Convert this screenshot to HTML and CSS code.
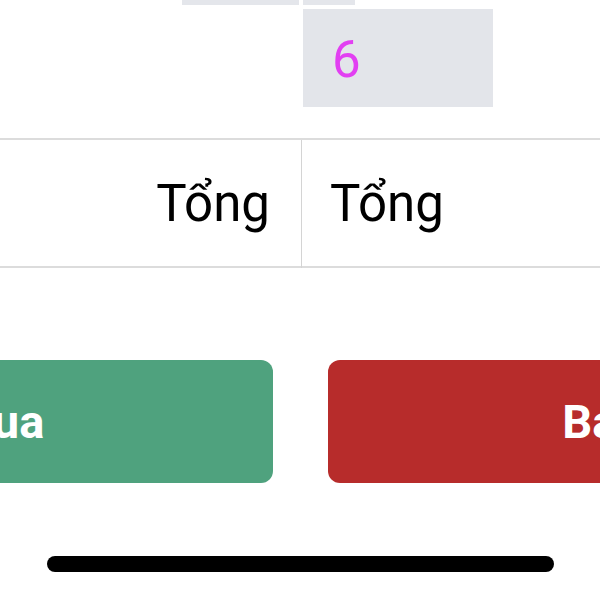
FILE: index.html
```html
<!DOCTYPE html>
<html lang="vi">
<head>
  <meta charset="UTF-8" />
  <meta name="viewport" content="width=device-width, initial-scale=1.0" />
  <title>Tổng</title>
  <link rel="stylesheet" href="styles.css">
</head>
<body>

  <div class="tren">
    <div class="cot-trai">
      <div class="thanh thanh-trai"></div>
    </div>
    <div class="cot-phai">
      <div class="thanh thanh-phai"></div>
      <div class="o-so">6</div>
    </div>
  </div>

  <div class="bang">
    <div class="o o-trai">Tổng</div>
    <div class="o o-phai">Tổng</div>
  </div>

  <div class="nut-hang">
    <button class="nut nut-mua">Mua</button>
    <button class="nut nut-ban">Bán</button>
  </div>

  <div class="home-bar"></div>

</body>
</html>
```

FILE: styles.css
```css
html, body {
  margin: 0;
  padding: 0;
  background-color: #fff;
  overflow: hidden;
  width: 600px;
  height: 600px;
}

body {
  font-family: Roboto, "Noto Sans", sans-serif;
  color: #000;
}

.tren {
  display: grid;
  grid-template-columns: 302px 1fr;
  height: 138px;
}

.cot-trai {
  display: flex;
  justify-content: flex-end;
  padding-right: 3px;
}

.cot-phai {
  padding-left: 1px;
}

.thanh {
  height: 5px;
  background-color: #e4e6eb;
}

.thanh-trai {
  width: 117px;
}

.thanh-phai {
  width: 52px;
}

.o-so {
  margin-top: 4px;
  width: 190px;
  height: 98px;
  background-color: #e3e5ea;
  color: #e23ff2;
  font-size: 51px;
  line-height: 102px;
  padding-left: 29px;
  box-sizing: border-box;
}

.bang {
  display: grid;
  grid-template-columns: 302px 1fr;
  border-top: 2px solid #dcdcdc;
  border-bottom: 2px solid #dcdcdc;
  height: 126px;
}

.o {
  font-size: 51px;
  line-height: 128px;
}

.o-trai {
  text-align: right;
  padding-right: 31px;
  border-right: 1px solid #d4d4d4;
}

.o-phai {
  padding-left: 28px;
}

.nut-hang {
  display: flex;
  gap: 55px;
  margin-top: 92px;
  margin-left: -277px;
}

.nut {
  flex: 0 0 550px;
  height: 123px;
  border: none;
  border-radius: 12px;
  color: #fff;
  font-family: Roboto, "Noto Sans", sans-serif;
  font-weight: bold;
  font-size: 47px;
}

.nut-mua {
  background-color: #4fa27e;
}

.nut-ban {
  background-color: #b72c2b;
}

.home-bar {
  width: 507px;
  height: 16px;
  margin: 73px 0 0 47px;
  background-color: #000;
  border-radius: 8px;
}
```
